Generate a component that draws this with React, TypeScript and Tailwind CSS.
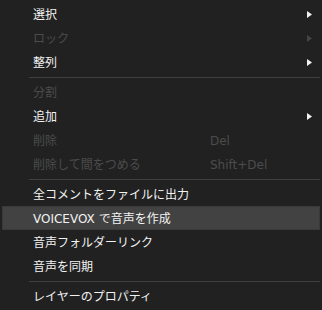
type Item =
  | { kind: "sep" }
  | { kind: "item"; label: string; disabled?: boolean; shortcut?: string; submenu?: boolean; active?: boolean };

const ITEMS: Item[] = [
  { kind: "item", label: "選択", submenu: true },
  { kind: "item", label: "ロック", submenu: true, disabled: true },
  { kind: "item", label: "整列", submenu: true },
  { kind: "sep" },
  { kind: "item", label: "分割", disabled: true },
  { kind: "item", label: "追加", submenu: true },
  { kind: "item", label: "削除", disabled: true, shortcut: "Del" },
  { kind: "item", label: "削除して間をつめる", disabled: true, shortcut: "Shift+Del" },
  { kind: "sep" },
  { kind: "item", label: "全コメントをファイルに出力" },
  { kind: "item", label: "VOICEVOX で音声を作成", active: true },
  { kind: "item", label: "音声フォルダーリンク" },
  { kind: "item", label: "音声を同期" },
  { kind: "sep" },
  { kind: "item", label: "レイヤーのプロパティ" },
];

function Arrow({ disabled }: { disabled?: boolean }) {
  return (
    <svg width="5" height="7" viewBox="0 0 5 7" className="ml-auto mr-[7px] -mt-[2px]">
      <polygon points="0,0 5,3.5 0,7" fill={disabled ? "#454545" : "#f2f2f2"} />
    </svg>
  );
}

export default function App() {
  return (
    <div
      className="w-[322px] h-[310px] bg-[#212121] p-[2px] text-[12px] select-none"
      style={{ fontFamily: '"DejaVu Sans", "Noto Sans CJK JP", sans-serif' }}
    >
      {ITEMS.map((item, i) => {
        if (item.kind === "sep") {
          return (
            <div key={i} className="h-[6px] flex items-center pl-[27px]">
              <div className="h-px w-full bg-[#404040]" />
            </div>
          );
        }
        return (
          <div
            key={i}
            className={`h-[24px] w-[318px] flex items-center pl-[30px] pt-[2px] border ${
              item.active ? "bg-[#424242] border-[#3a3a3a]" : "border-transparent"
            } ${item.disabled ? "text-[#4c4c4c]" : "text-[#f2f2f2]"}`}
          >
            <span className="w-[177px] shrink-0 leading-none">{item.label}</span>
            {item.shortcut && <span className="leading-none">{item.shortcut}</span>}
            {item.submenu && <Arrow disabled={item.disabled} />}
          </div>
        );
      })}
    </div>
  );
}
